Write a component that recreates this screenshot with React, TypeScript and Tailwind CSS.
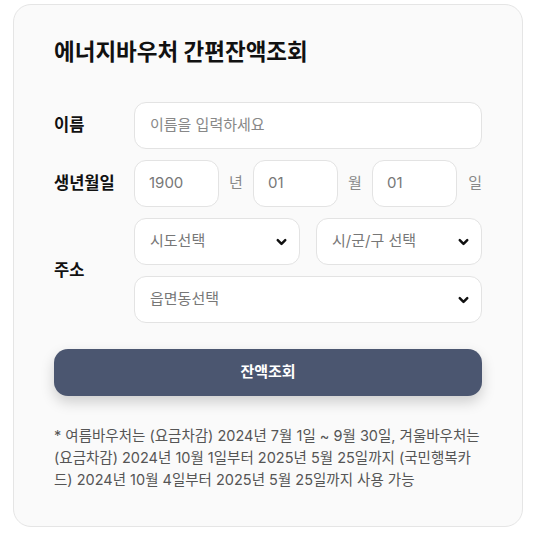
import React from "react";

function Chevron() {
  return (
    <svg width="11" height="6" viewBox="5 8 14 8" fill="none" stroke="#111" strokeWidth="3.3" strokeLinecap="round" strokeLinejoin="round" className="overflow-visible">
      <path d="M7 9.5l5 5 5-5" />
    </svg>
  );
}

function Select({ label, className }: { label: string; className?: string }) {
  return (
    <div className={"h-[47px] rounded-[12px] border border-[#e3e3e3] bg-white flex items-center justify-between pl-[15px] pr-[12px] " + (className ?? "")}>
      <span className="text-[15px] text-[#777]">{label}</span>
      <Chevron />
    </div>
  );
}

export default function App() {
  return (
    <div className="bg-white min-h-[539px] pt-[4px] px-[13px]" style={{ fontFamily: "Inter, 'Noto Sans CJK KR', sans-serif" }}>
      <div className="w-[510px] rounded-[18px] border border-[#e5e5e5] bg-[#fafafa] px-[40px] pt-[31px] pb-[35px]">
        <h1 className="text-[22.5px] font-bold text-[#111] leading-[32px]">에너지바우처 간편잔액조회</h1>
        <div className="mt-[34px] flex flex-col gap-[11px]">
          <div className="flex items-center">
            <div className="w-[80px] text-[16.5px] font-bold text-[#111]">이름</div>
            <div className="flex-1 h-[47px] rounded-[12px] border border-[#e3e3e3] bg-white flex items-center px-[15px] text-[15px] text-[#888]">이름을 입력하세요</div>
          </div>
          <div className="flex items-center">
            <div className="w-[80px] text-[16.5px] font-bold text-[#111]">생년월일</div>
            <div className="flex-1 flex items-center">
              <div className="w-[85px] h-[47px] rounded-[12px] border border-[#e3e3e3] bg-white flex items-center px-[14px] text-[15px] text-[#777]">1900</div>
              <div className="w-[34px] text-center text-[15px] text-[#888]">년</div>
              <div className="w-[85px] h-[47px] rounded-[12px] border border-[#e3e3e3] bg-white flex items-center px-[14px] text-[15px] text-[#777]">01</div>
              <div className="w-[34px] text-center text-[15px] text-[#888]">월</div>
              <div className="w-[85px] h-[47px] rounded-[12px] border border-[#e3e3e3] bg-white flex items-center px-[14px] text-[15px] text-[#777]">01</div>
              <div className="flex-1 text-right text-[15px] text-[#888]">일</div>
            </div>
          </div>
          <div className="flex items-center">
            <div className="w-[80px] text-[16.5px] font-bold text-[#111]">주소</div>
            <div className="flex-1 flex flex-col gap-[11px]">
              <div className="flex gap-[16px]">
                <Select label="시도선택" className="flex-1" />
                <Select label="시/군/구 선택" className="flex-1" />
              </div>
              <Select label="읍면동선택" />
            </div>
          </div>
        </div>
        <button className="mt-[26px] w-full h-[47px] rounded-[14px] bg-[#4b5670] text-white text-[15px] font-bold shadow-[0_6px_14px_rgba(0,0,0,0.18)]">잔액조회</button>
        <p className="mt-[29px] text-[14.5px] leading-[22px] text-[#555]">
          * 여름바우처는 (요금차감) 2024년 7월 1일 ~ 9월 30일, 겨울바우처는 (요금차감) 2024년 10월 1일부터 2025년 5월 25일까지 (국민행복카드) 2024년 10월 4일부터 2025년 5월 25일까지 사용 가능
        </p>
      </div>
    </div>
  );
}
